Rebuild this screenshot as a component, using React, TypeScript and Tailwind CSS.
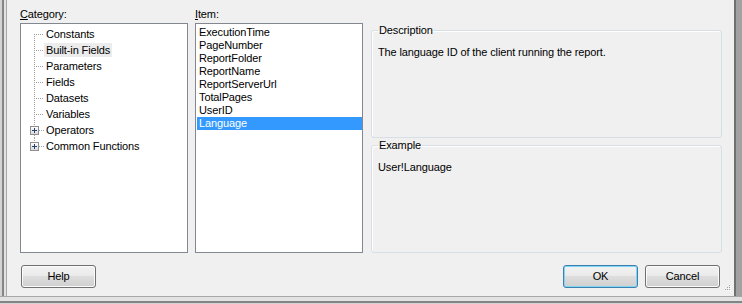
import React from "react";

type Category = { name: string; selected?: boolean; expandable?: boolean };

const categories: Category[] = [
  { name: "Constants" },
  { name: "Built-in Fields", selected: true },
  { name: "Parameters" },
  { name: "Fields" },
  { name: "Datasets" },
  { name: "Variables" },
  { name: "Operators", expandable: true },
  { name: "Common Functions", expandable: true },
];

const items = [
  "ExecutionTime",
  "PageNumber",
  "ReportFolder",
  "ReportName",
  "ReportServerUrl",
  "TotalPages",
  "UserID",
  "Language",
];

const selectedItem = "Language";

// dotted tree connector for one row (23x16), drawn like the classic tree view
function TreeGutter({ first, last, expandable }: { first: boolean; last: boolean; expandable?: boolean }) {
  const dot = "#a0a0a0";
  return (
    <svg width="23" height="16" viewBox="0 0 23 16" className="shrink-0" shapeRendering="crispEdges">
      {expandable ? (
        <>
          <line x1="13.5" y1="0" x2="13.5" y2="4" stroke={dot} strokeDasharray="1 1" />
          {!last && <line x1="13.5" y1="13" x2="13.5" y2="16" stroke={dot} strokeDasharray="1 1" />}
          <line x1="18" y1="8.5" x2="23" y2="8.5" stroke={dot} strokeDasharray="1 1" />
          <defs>
            <linearGradient id="pb" x1="0" y1="0" x2="0" y2="1">
              <stop offset="0" stopColor="#ffffff" />
              <stop offset="1" stopColor="#d8d8d8" />
            </linearGradient>
          </defs>
          <rect x="9.5" y="4.5" width="8" height="8" fill="url(#pb)" stroke="#8f8f8f" />
          <line x1="11" y1="8.5" x2="16" y2="8.5" stroke="#24416f" />
          <line x1="13.5" y1="6" x2="13.5" y2="11" stroke="#24416f" />
        </>
      ) : (
        <>
          <line x1="13.5" y1={first ? 8 : 0} x2="13.5" y2={last ? 9 : 16} stroke={dot} strokeDasharray="1 1" />
          <line x1="15" y1="8.5" x2="23" y2="8.5" stroke={dot} strokeDasharray="1 1" />
        </>
      )}
    </svg>
  );
}

function WinButton({ label, isDefault }: { label: string; isDefault?: boolean }) {
  return (
    <button
      className={
        "w-[75px] h-[23px] rounded-[3px] border text-[11px] leading-[13px] text-black bg-[linear-gradient(#f2f2f2,#ebebeb_45%,#dddddd_50%,#cfcfcf)] " +
        (isDefault
          ? "border-[#3c7fb1] shadow-[inset_0_0_0_1px_#7fd6f3]"
          : "border-[#707070] shadow-[inset_0_0_0_1px_#fbfbfb]")
      }
    >
      {label}
    </button>
  );
}

function GroupBox({ title, text }: { title: string; text: string }) {
  return (
    <fieldset className="h-[114px] rounded-[3px] border border-[#d5dfe5] pl-[6px] pr-2 shadow-[inset_1px_1px_0_#fff]">
      <legend className="px-px text-[11px] leading-[13px]">{title}</legend>
      <p className="pt-[9px] text-[11px] leading-[13px]">{text}</p>
    </fieldset>
  );
}

export default function App() {
  return (
    <div
      className="w-[742px] h-[304px] flex flex-col overflow-hidden bg-[#f0f0f0] text-black tracking-[-0.12px]"
      style={{ fontFamily: '"Liberation Sans", Arial, sans-serif' }}
    >
      <div className="flex flex-1 min-h-0">
        {/* left window frame */}
        <div className="flex w-[7px] shrink-0">
          <div className="w-[2px] bg-[#d4d4d4]" />
          <div className="w-[2px] bg-[#858585]" />
          <div className="w-[2px] bg-[#e2e2e2]" />
          <div className="w-px bg-[#a8a8a8]" />
        </div>

        {/* client area */}
        <div className="relative flex-1 flex flex-col pt-2 pl-[13px] pr-3">
          <div className="flex">
            {/* Category */}
            <div className="w-[168px] flex flex-col">
              <div className="h-[15px] text-[11px] leading-[13px]">
                <span className="underline underline-offset-1">C</span>ategory:
              </div>
              <div className="h-[230px] border border-[#828790] bg-white pt-[2px]">
                {categories.map((c, i) => (
                  <div key={c.name} className="flex h-4 items-center">
                    <TreeGutter first={i === 0} last={i === categories.length - 1} expandable={c.expandable} />
                    <span
                      className={
                        "h-[14px] px-[2px] text-[11px] leading-[14px] whitespace-nowrap " +
                        (c.selected ? "bg-[#ececec]" : "")
                      }
                    >
                      {c.name}
                    </span>
                  </div>
                ))}
              </div>
            </div>

            {/* Item */}
            <div className="w-[168px] ml-[7px] flex flex-col">
              <div className="h-[15px] text-[11px] leading-[13px]">
                <span className="underline underline-offset-1">I</span>tem:
              </div>
              <div className="h-[230px] border border-[#828790] bg-white pt-[2px] pl-px">
                {items.map((it) => (
                  <div
                    key={it}
                    className={
                      "h-[13px] pl-[2px] text-[11px] leading-[13px] whitespace-nowrap " +
                      (it === selectedItem ? "bg-[#3399ff] text-white" : "")
                    }
                  >
                    {it}
                  </div>
                ))}
              </div>
            </div>

            {/* Description / Example */}
            <div className="w-[351px] ml-2 pt-4 flex flex-col gap-px">
              <GroupBox title="Description" text="The language ID of the client running the report." />
              <GroupBox title="Example" text="User!Language" />
            </div>
          </div>

          {/* buttons */}
          <div className="mt-3 flex items-center justify-between pl-px pr-[2px]">
            <WinButton label="Help" />
            <div className="flex gap-[7px]">
              <WinButton label="OK" isDefault />
              <WinButton label="Cancel" />
            </div>
          </div>

          {/* size grip */}
          <svg width="8" height="8" viewBox="0 0 8 8" className="absolute right-[2px] bottom-[3px]" shapeRendering="crispEdges">
            {[
              [5, 0],
              [3, 2],
              [5, 2],
              [1, 4],
              [3, 4],
              [5, 4],
            ].map(([x, y]) => (
              <g key={`${x}-${y}`}>
                <rect x={x + 1} y={y + 1} width="1" height="1" fill="#ffffff" />
                <rect x={x} y={y} width="1" height="1" fill="#a0a0a0" />
              </g>
            ))}
          </svg>
        </div>

        {/* right window frame */}
        <div className="flex w-2 shrink-0">
          <div className="w-[2px] bg-[#707070]" />
          <div className="w-[6px] bg-[#a2a2a2]" />
        </div>
      </div>

      {/* bottom window frame */}
      <div className="flex flex-col h-2 shrink-0">
        <div className="h-px bg-[#a8a8a8]" />
        <div className="h-1 bg-[#e2e2e2]" />
        <div className="h-[2px] bg-[#858585]" />
        <div className="h-px bg-[#d4d4d4]" />
      </div>
    </div>
  );
}
